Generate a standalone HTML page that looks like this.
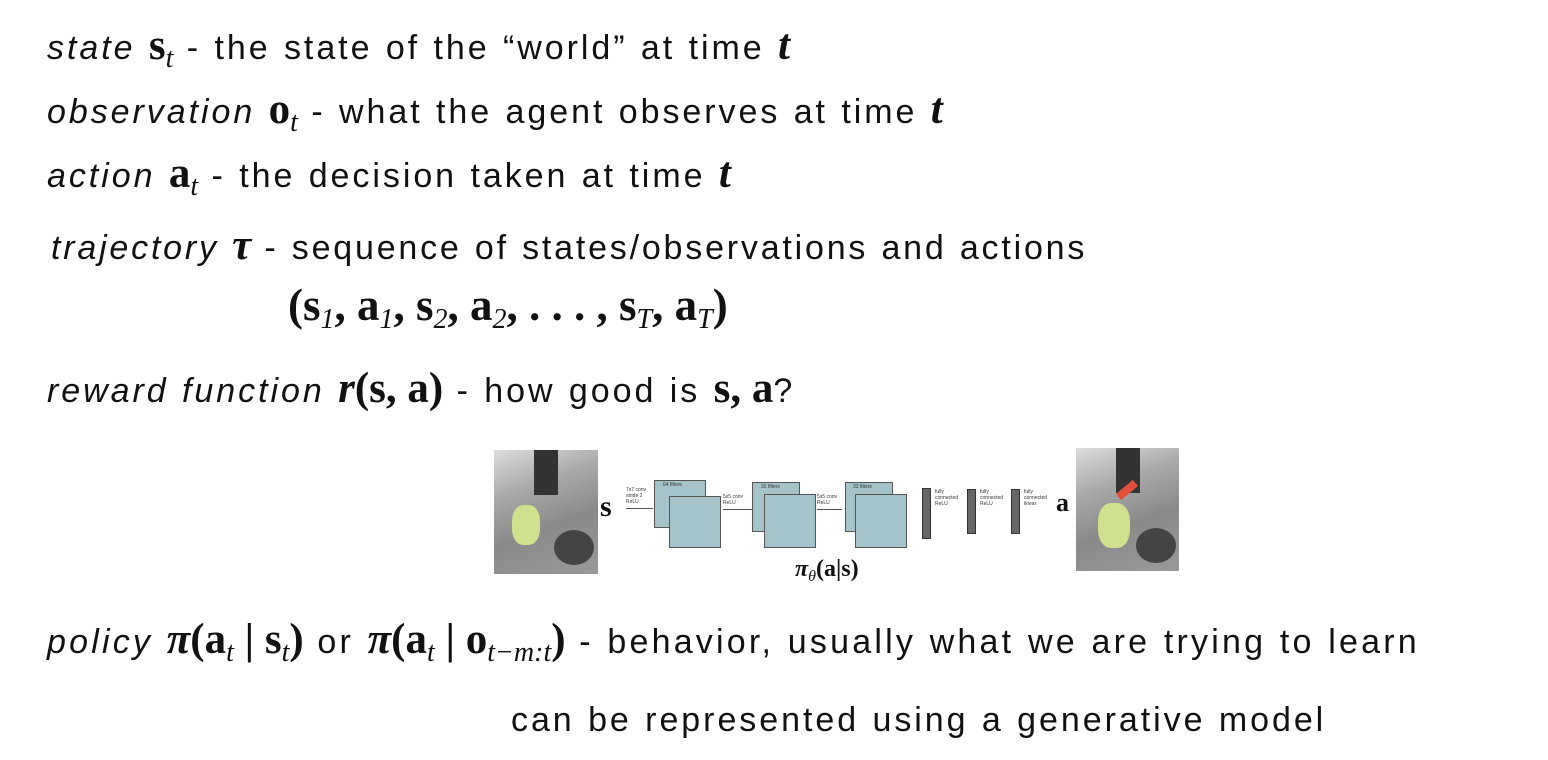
<!DOCTYPE html>
<html><head><meta charset="utf-8"><style>
body{margin:0;width:1548px;height:760px;background:#fff;position:relative;overflow:hidden;font-family:"Liberation Sans",sans-serif;color:#111}
.l{position:absolute;font-size:34px;line-height:40px;white-space:nowrap;letter-spacing:2.95px;word-spacing:1px}
.m{font-family:"Liberation Serif",serif;font-size:43px;letter-spacing:0;word-spacing:0}
.b{font-weight:bold}
.i{font-style:italic}
sub{font-family:"Liberation Serif",serif;font-style:italic;font-size:28px;vertical-align:-8px;line-height:0;letter-spacing:0;font-weight:normal}
.d{position:absolute;font-family:"Liberation Sans",sans-serif;font-size:5px;line-height:6px;color:#333}
.f{position:absolute;background:#a4c4c9;border:1px solid #555}
.bar{position:absolute;width:7px;background:#666;border:1px solid #333}
.ar{position:absolute;height:1px;background:#555}
</style></head><body>
<div class="l" style="left:47px;top:26px"><i>state</i> <span class="m b">s</span><sub>t</sub> - the state of the “world” at time <span class="m b i">t</span></div>
<div class="l" style="left:47px;top:90px"><i>observation</i> <span class="m b">o</span><sub>t</sub> - what the agent observes at time <span class="m b i">t</span></div>
<div class="l" style="left:47px;top:154px"><i>action</i> <span class="m b">a</span><sub>t</sub> - the decision taken at time <span class="m b i">t</span></div>
<div class="l" style="left:51px;top:226px;letter-spacing:2.8px"><i>trajectory</i> <span class="m b i">τ</span> - sequence of states/observations and actions</div>
<div class="l m b" style="left:288px;top:285px;font-size:45px">(s<sub>1</sub>, a<sub>1</sub>, s<sub>2</sub>, a<sub>2</sub>, . . . , s<sub><i>T</i></sub>, a<sub><i>T</i></sub>)</div>
<div class="l" style="left:47px;top:369px"><i>reward function</i> <span class="m b"><i>r</i>(s, a)</span> - how good is <span class="m b">s, a</span>?</div>

<div style="position:absolute;left:494px;top:450px;width:104px;height:124px;background:linear-gradient(160deg,#ddd 0%,#aaa 30%,#8a8a8a 60%,#999 100%)">
<div style="position:absolute;left:40px;top:0;width:24px;height:45px;background:#333"></div>
<div style="position:absolute;left:18px;top:55px;width:28px;height:40px;background:#cfe08e;border-radius:40%"></div>
<div style="position:absolute;left:60px;top:80px;width:40px;height:35px;background:#444;border-radius:50%"></div></div>
<div style="position:absolute;left:600px;top:490px;font:bold 30px 'Liberation Serif',serif">s</div>
<div class="d" style="left:626px;top:487px">7x7 conv<br>stride 2<br>ReLU</div>
<div class="ar" style="left:626px;top:508px;width:27px"></div>
<div class="f" style="left:654px;top:480px;width:50px;height:46px"></div>
<div class="f" style="left:669px;top:496px;width:50px;height:50px"></div>
<div class="d" style="left:663px;top:482px">64 filters</div>
<div class="d" style="left:723px;top:494px">5x5 conv<br>ReLU</div>
<div class="ar" style="left:723px;top:509px;width:36px"></div>
<div class="f" style="left:752px;top:482px;width:46px;height:48px"></div>
<div class="f" style="left:764px;top:494px;width:50px;height:52px"></div>
<div class="d" style="left:761px;top:484px">32 filters</div>
<div class="d" style="left:817px;top:494px">5x5 conv<br>ReLU</div>
<div class="ar" style="left:817px;top:509px;width:25px"></div>
<div class="f" style="left:845px;top:482px;width:46px;height:48px"></div>
<div class="f" style="left:855px;top:494px;width:50px;height:52px"></div>
<div class="d" style="left:853px;top:484px">32 filters</div>
<div class="bar" style="left:922px;top:488px;height:49px"></div>
<div class="d" style="left:935px;top:489px">fully<br>connected<br>ReLU</div>
<div class="bar" style="left:967px;top:489px;height:43px"></div>
<div class="d" style="left:980px;top:489px">fully<br>connected<br>ReLU</div>
<div class="bar" style="left:1011px;top:489px;height:43px"></div>
<div class="d" style="left:1024px;top:489px">fully<br>connected<br>linear</div>
<div style="position:absolute;left:1056px;top:488px;font:bold 26px 'Liberation Serif',serif">a</div>
<div style="position:absolute;left:795px;top:556px;font:bold 24px 'Liberation Serif',serif"><i>π</i><sub style="font-size:16px;vertical-align:-5px">θ</sub>(a|s)</div>
<div style="position:absolute;left:1076px;top:448px;width:103px;height:123px;background:linear-gradient(160deg,#ddd 0%,#aaa 30%,#8a8a8a 60%,#999 100%)">
<div style="position:absolute;left:40px;top:0;width:24px;height:45px;background:#333"></div>
<div style="position:absolute;left:22px;top:55px;width:32px;height:45px;background:#cfe08e;border-radius:40%"></div>
<div style="position:absolute;left:40px;top:38px;width:22px;height:8px;background:#e0503a;transform:rotate(-40deg)"></div>
<div style="position:absolute;left:60px;top:80px;width:40px;height:35px;background:#444;border-radius:50%"></div></div>

<div class="l" style="left:47px;top:620px;letter-spacing:3.2px"><i>policy</i> <span class="m b"><i>π</i>(a<sub>t</sub> | s<sub>t</sub>)</span> or <span class="m b"><i>π</i>(a<sub>t</sub> | o<sub>t−m:t</sub>)</span> - behavior, usually what we are trying to learn</div>
<div class="l" style="left:511px;top:700px">can be represented using a generative model</div>
</body></html>
